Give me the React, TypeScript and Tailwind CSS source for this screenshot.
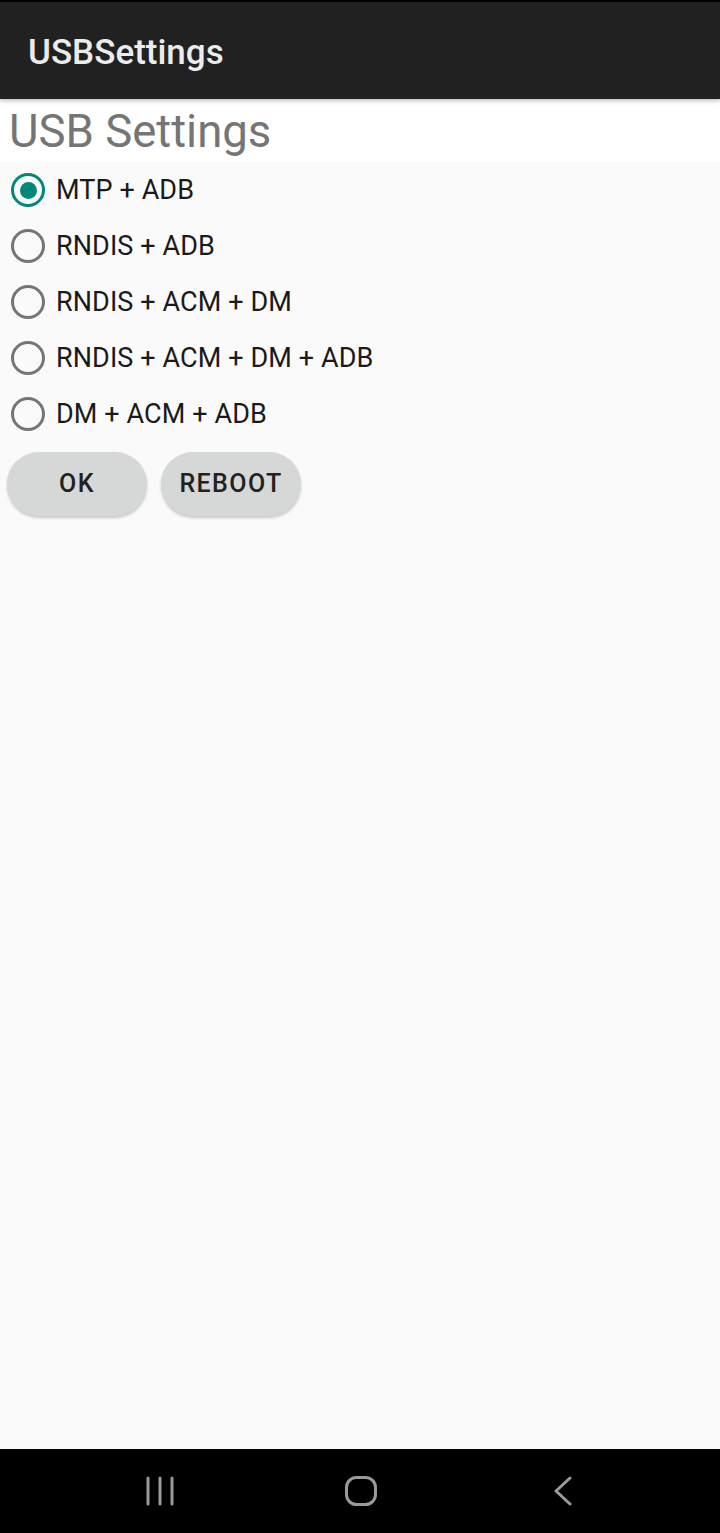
import React, { useState } from 'react';

const options = [
  'MTP + ADB',
  'RNDIS + ADB',
  'RNDIS + ACM + DM',
  'RNDIS + ACM + DM + ADB',
  'DM + ACM + ADB',
];

const Radio: React.FC<{ checked: boolean }> = ({ checked }) => (
  <span
    className={`flex h-[34px] w-[34px] items-center justify-center rounded-full border-[3.5px] ${
      checked ? 'border-[#00897b]' : 'border-[#757575]'
    }`}
  >
    {checked && <span className="h-[17px] w-[17px] rounded-full bg-[#00897b]" />}
  </span>
);

const App: React.FC = () => {
  const [selected, setSelected] = useState(0);

  return (
    <div className="flex h-[1533px] w-[720px] flex-col bg-[#fafafa] font-['Roboto',sans-serif]">
      {/* action bar */}
      <header className="relative z-10 flex h-[99px] items-center border-t-2 border-black bg-[#212121] pl-[28px] pt-[5px] shadow-[0_2px_4px_rgba(0,0,0,0.25)]">
        <h1 className="text-[35px] font-medium text-[#ececec]">USBSettings</h1>
      </header>

      <main className="flex flex-1 flex-col">
        <div className="flex h-[63px] items-center bg-white pl-[9px] pt-[3px]">
          <h2 className="text-[45.5px] leading-none text-[#757575]">USB Settings</h2>
        </div>

        <div className="flex flex-col">
          {options.map((opt, i) => (
            <button
              key={opt}
              onClick={() => setSelected(i)}
              className="flex h-[56px] items-center gap-[11px] pl-[11px] text-left"
            >
              <Radio checked={selected === i} />
              <span className="text-[27px] tracking-[0.1px] text-[#1a1a1a]">{opt}</span>
            </button>
          ))}
        </div>

        <div className="flex gap-[14px] pl-[7px] pt-[10px]">
          <button className="h-[64px] w-[140px] rounded-full bg-[#d6d7d7] text-[25px] font-medium tracking-[1.4px] text-[#212121] shadow-[0_2px_3px_rgba(0,0,0,0.2)]">
            OK
          </button>
          <button className="h-[64px] w-[140px] rounded-full bg-[#d6d7d7] text-[25px] font-medium tracking-[1.4px] text-[#212121] shadow-[0_2px_3px_rgba(0,0,0,0.2)]">
            REBOOT
          </button>
        </div>
      </main>

      {/* system navigation */}
      <nav className="flex h-[84px] items-center bg-black pl-[145px]">
        <svg width="30" height="30" viewBox="0 0 30 30">
          <g stroke="#9a9a9a" strokeWidth="3" strokeLinecap="round">
            <line x1="3" y1="2" x2="3" y2="28" />
            <line x1="15" y1="2" x2="15" y2="28" />
            <line x1="27" y1="2" x2="27" y2="28" />
          </g>
        </svg>
        <svg width="32" height="30" viewBox="0 0 32 30" className="ml-[170px]">
          <rect x="1.5" y="1.5" width="29" height="27" rx="10" fill="none" stroke="#9a9a9a" strokeWidth="3" />
        </svg>
        <svg width="20" height="30" viewBox="0 0 20 30" className="ml-[176px]">
          <polyline points="17,2 3,15 17,28" fill="none" stroke="#9a9a9a" strokeWidth="3" strokeLinecap="round" strokeLinejoin="round" />
        </svg>
      </nav>
    </div>
  );
};

export default App;
